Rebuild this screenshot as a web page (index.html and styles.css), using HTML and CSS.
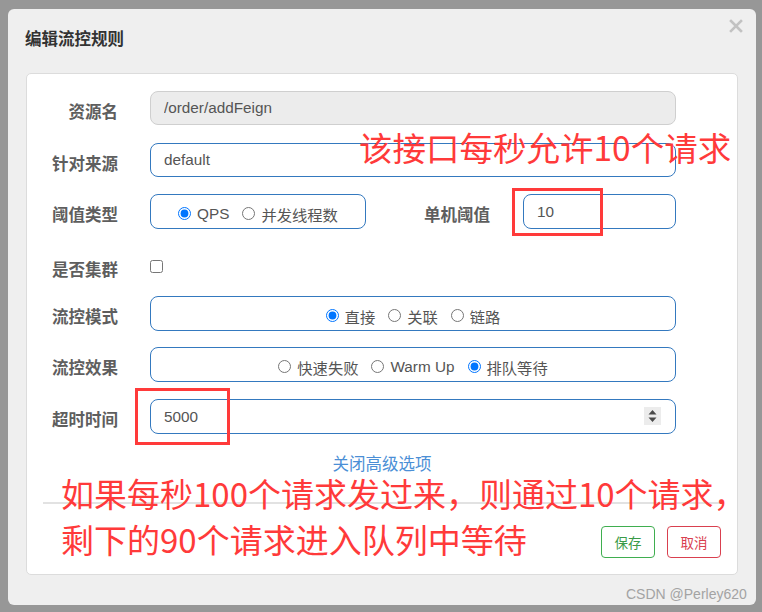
FILE: index.html
```html
<!DOCTYPE html>
<html lang="zh-CN">
<head>
<meta charset="utf-8">
<title>编辑流控规则</title>
<link rel="stylesheet" href="styles.css">
</head>
<body>
<div class="page">
  <div class="modal">
    <div class="modal-header">
      <h3 class="modal-title">编辑流控规则</h3>
      <svg class="close" width="14" height="14" viewBox="0 0 14 14"><path d="M2 2 L12 12 M12 2 L2 12" stroke="#c2c2c2" stroke-width="2.6" stroke-linecap="square"/></svg>
    </div>
    <div class="panel">
      <div class="row r1">
        <label class="lbl">资源名</label>
        <input class="field readonly" type="text" value="/order/addFeign" readonly>
      </div>
      <div class="row r2">
        <label class="lbl">针对来源</label>
        <input class="field" type="text" value="default">
      </div>
      <div class="row r3">
        <label class="lbl">阈值类型</label>
        <div class="group small">
          <label class="opt"><input type="radio" name="grade" checked>QPS</label>
          <label class="opt"><input type="radio" name="grade">并发线程数</label>
        </div>
        <label class="lbl lbl2">单机阈值</label>
        <input class="field short" type="text" value="10">
      </div>
      <div class="row r4">
        <label class="lbl">是否集群</label>
        <input class="chk" type="checkbox">
      </div>
      <div class="row r5">
        <label class="lbl">流控模式</label>
        <div class="group">
          <label class="opt"><input type="radio" name="mode" checked>直接</label>
          <label class="opt"><input type="radio" name="mode">关联</label>
          <label class="opt"><input type="radio" name="mode">链路</label>
        </div>
      </div>
      <div class="row r6">
        <label class="lbl">流控效果</label>
        <div class="group">
          <label class="opt"><input type="radio" name="eff">快速失败</label>
          <label class="opt"><input type="radio" name="eff">Warm Up</label>
          <label class="opt"><input type="radio" name="eff" checked>排队等待</label>
        </div>
      </div>
      <div class="row r7">
        <label class="lbl">超时时间</label>
        <div class="field num">
          <span class="num-val">5000</span>
          <span class="spin">
            <svg width="17" height="18" viewBox="0 0 17 18"><path d="M4.5 7.5 L8.5 3 L12.5 7.5 Z M4.5 10.5 L8.5 15 L12.5 10.5 Z" fill="#4a4a4a"/></svg>
          </span>
        </div>
      </div>
      <div class="adv"><a class="adv-link">关闭高级选项</a></div>
      <div class="divider"></div>
      <div class="actions">
        <button class="btn btn-save">保存</button>
        <button class="btn btn-cancel">取消</button>
      </div>
    </div>
  </div>

  <div class="note note1">该接口每秒允许10个请求</div>
  <div class="note note2a">如果每秒100个请求发过来，则通过10个请求，</div>
  <div class="note note2b">剩下的90个请求进入队列中等待</div>
  <div class="mark mark1"></div>
  <div class="mark mark2"></div>
  <div class="watermark">CSDN @Perley620</div>
</div>
</body>
</html>
```

FILE: styles.css
```css
* { box-sizing: border-box; }
html, body { margin: 0; padding: 0; }
body { background: #979797; }

.page {
  position: relative;
  width: 762px;
  height: 612px;
  overflow: hidden;
  background: #979797;
  padding: 9px 0 0 8px;
  font-family: "Liberation Sans", "Noto Sans CJK SC", sans-serif;
}

.modal {
  width: 748px;
  height: 596px;
  background: #efefef;
  border-radius: 6px;
}

.modal-header {
  height: 64px;
  display: flex;
  justify-content: space-between;
  padding: 19px 13px 0 17px;
}
.modal-title {
  margin: 0;
  font-family: "Noto Sans CJK SC", sans-serif;
  font-size: 16.5px;
  line-height: 20px;
  font-weight: 700;
  color: #333;
}
.close { margin-top: -9px; }

.panel {
  margin: 0 18px;
  background: #fff;
  border: 1px solid #dcdcdc;
  border-radius: 5px;
  padding: 17px 16px 16px 0;
}

.row {
  display: flex;
  align-items: center;
  height: 35px;
}
.r1 { height: 34px; }
.r2 { height: 34px; margin-top: 18px; }
.r3 { margin-top: 17px; }
.r4 { height: 34px; margin-top: 20px; }
.r5 { margin-top: 13px; }
.r6 { margin-top: 16px; }
.r7 { margin-top: 17px; }

.lbl {
  width: 91px;
  margin-right: 32px;
  padding-top: 5px;
  text-align: right;
  font-family: "Noto Sans CJK SC", sans-serif;
  font-weight: 700;
  font-size: 16.5px;
  color: #5e5e5e;
}
.lbl2 { width: 124px; margin-right: 33px; }

.field {
  width: 526px;
  height: 100%;
  border: 1px solid #3479bf;
  border-radius: 8px;
  padding: 0 13px;
  font-family: "Liberation Sans", "Noto Sans CJK SC", sans-serif;
  font-size: 15.3px;
  color: #555;
  background: #fff;
  outline: none;
}
.field.readonly {
  background: #ececec;
  border-color: #cfcfcf;
}
.field.short { width: 153px; }

.group {
  width: 526px;
  height: 100%;
  border: 1px solid #3479bf;
  border-radius: 8px;
  display: flex;
  align-items: center;
  justify-content: center;
  gap: 13px;
  padding-top: 5px;
}
.group.small { width: 216px; }

.opt {
  display: flex;
  align-items: center;
  font-family: "Liberation Sans", "Noto Sans CJK SC", sans-serif;
  font-size: 15.3px;
  color: #555;
}
.opt input {
  margin: 0 6px 2px 0;
  width: 13px;
  height: 13px;
}

.chk {
  margin: 0;
  width: 13px;
  height: 13px;
}

.num {
  display: flex;
  align-items: center;
  justify-content: space-between;
  padding-right: 14px;
}
.spin {
  display: flex;
  width: 17px;
  height: 18px;
  background: #ececec;
  margin-top: -1px;
}

.adv {
  margin-top: 19px;
  height: 20px;
  text-align: center;
  padding-left: 16px;
}
.adv-link {
  font-family: "Noto Sans CJK SC", sans-serif;
  font-size: 16.5px;
  line-height: 20px;
  color: #4b8fd6;
  cursor: pointer;
}

.divider {
  margin: 29px 0 0 16px;
  border-top: 2px solid #e2e2e2;
}

.actions {
  margin-top: 22px;
  display: flex;
  justify-content: flex-end;
  gap: 12px;
}
.btn {
  width: 54px;
  height: 32px;
  background: #fff;
  border-radius: 4px;
  font-family: "Noto Sans CJK SC", sans-serif;
  font-size: 13.5px;
  padding: 0;
}
.btn-save { border: 1px solid #3fae4f; color: #3a9a48; }
.btn-cancel { border: 1px solid #d9404f; color: #d9404f; }

.note {
  position: absolute;
  font-family: "Noto Sans CJK SC", sans-serif;
  font-weight: 400;
  font-size: 33.5px;
  line-height: 38px;
  color: #ff3a3a;
  white-space: nowrap;
}
.note1 { left: 359px; top: 128px; }
.note2a { left: 61px; top: 474px; font-size: 33px; }
.note2b { left: 61px; top: 520px; font-size: 33px; }

.mark {
  position: absolute;
  border: 3px solid #ff3a3a;
}
.mark1 { left: 512px; top: 188px; width: 91px; height: 48px; }
.mark2 { left: 135px; top: 388px; width: 95px; height: 57px; }

.watermark {
  position: absolute;
  left: 626px;
  top: 586px;
  font-family: "Liberation Sans", sans-serif;
  font-size: 14px;
  line-height: 16px;
  color: #a3a3a3;
}
```
